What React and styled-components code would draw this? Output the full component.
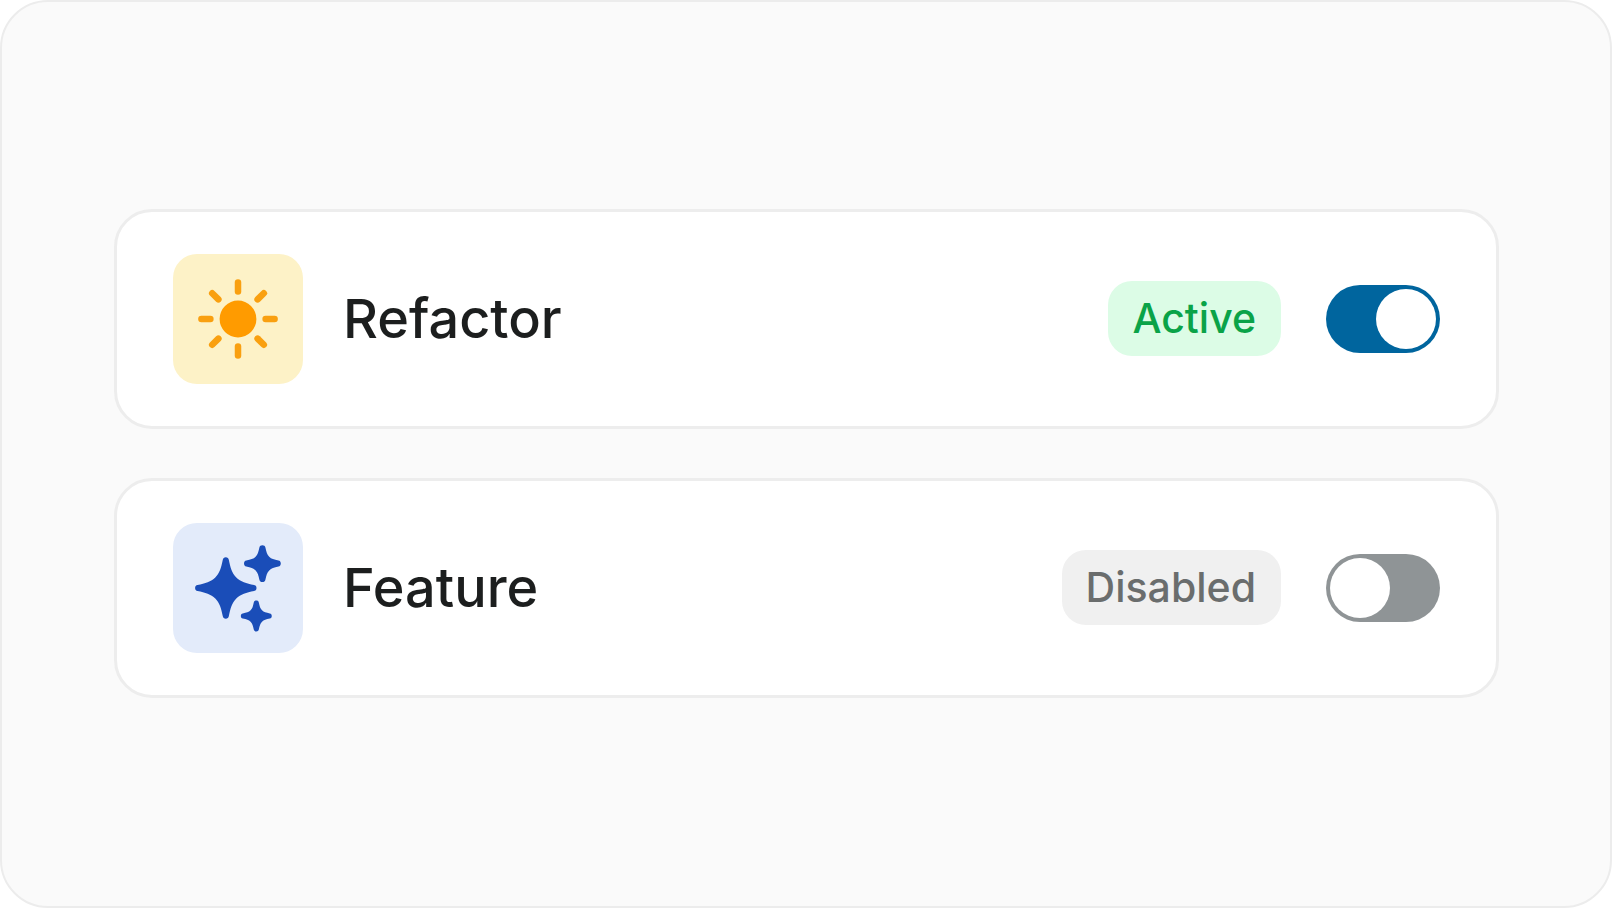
import React, { useState } from 'react';
import styled, { createGlobalStyle } from 'styled-components';


const GlobalStyle = createGlobalStyle`
    *, *::before, *::after {
        box-sizing: border-box;
    }
    body {
        margin: 0;
        background-color: #fff;
        font-family: Inter, "Liberation Sans", sans-serif;
    }
`;

const Panel = styled.main`
    min-height: 100vh;
    display: flex;
    flex-direction: column;
    justify-content: center;
    gap: 49px;
    padding: 0px 111px 2px 112px;
    background-color: #fafafa;
    border: 2px solid #ececec;
    border-radius: 48px;
`;

const Card = styled.section`
    display: flex;
    align-items: center;
    padding: 42px 56px;
    background-color: #fff;
    border: 3px solid #ededed;
    border-radius: 38px;
`;

const IconTile = styled.div`
    width: 130px;
    height: 130px;
    flex-shrink: 0;
    margin-right: 40px;
    border-radius: 24px;
    background-color: ${({ $color }) => $color};
    svg {
        display: block;
    }
`;

const Title = styled.label`
    flex: 1;
    font-size: 54px;
    line-height: 64px;
    font-weight: 500;
    color: #1c1e1e;
    cursor: pointer;
`;

const Badge = styled.span`
    padding: 12px 25px 12px 24px;
    margin-right: 45px;
    border-radius: 24px;
    font-size: 41px;
    line-height: 51px;
    font-weight: 500;
    color: ${({ $active }) => ($active ? '#0aa348' : '#6a6d6d')};
    background-color: ${({ $active }) => ($active ? '#dcfce6' : '#f0f0f0')};
`;

const Switch = styled.input`
    appearance: none;
    display: flex;
    flex-shrink: 0;
    justify-content: flex-start;
    width: 114px;
    height: 68px;
    margin: 0;
    padding: 4px;
    border-radius: 34px;
    background-color: #8f9496;
    cursor: pointer;
    &::before{
        content: '';
        width: 60px;
        height: 60px;
        border-radius: 50%;
        background-color: #fff;
    }
    &:checked{
        justify-content: flex-end;
        background-color: #00659e;
    }
`;

const SunIcon = () => (
    <svg width="130" height="130" viewBox="-65 -65 130 130" aria-hidden="true">
        <circle r="18.4" fill="#ff9b00" />
        <g stroke="#f9a010" strokeWidth="6.5" strokeLinecap="round">
            {[0, 90, 180, 270].map((angle) => (
                <g key={angle} transform={`rotate(${angle})`}>
                    <path d="M0 -36.6V-27.6" />
                    <path d="M-25.8 -25.8L-19.6 -19.6" />
                </g>
            ))}
        </g>
    </svg>
);

const STAR = `M0 -30.7C1.7 -30.7 2.7 -29.8 3 -28.3C4.6 -20.5 6.2 -14.8 10.5 -10.5
    C14.8 -6.2 20.5 -4.6 28.3 -3C29.8 -2.7 30.7 -1.7 30.7 0
    C30.7 1.7 29.8 2.7 28.3 3C20.5 4.6 14.8 6.2 10.5 10.5
    C6.2 14.8 4.6 20.5 3 28.3C2.7 29.8 1.7 30.7 0 30.7
    C-1.7 30.7 -2.7 29.8 -3 28.3C-4.6 20.5 -6.2 14.8 -10.5 10.5
    C-14.8 6.2 -20.5 4.6 -28.3 3C-29.8 2.7 -30.7 1.7 -30.7 0
    C-30.7 -1.7 -29.8 -2.7 -28.3 -3C-20.5 -4.6 -14.8 -6.2 -10.5 -10.5
    C-6.2 -14.8 -4.6 -20.5 -3 -28.3C-2.7 -29.8 -1.7 -30.7 0 -30.7Z`;

// the small stars have blunter tips than the big one
const SMALL_STAR = `M0 -18.4C1.6 -18.4 2.7 -17.6 3 -16.1C4 -11.6 4.6 -9 6.8 -6.8
    C9 -4.6 11.6 -4 16.1 -3C17.6 -2.7 18.4 -1.6 18.4 0
    C18.4 1.6 17.6 2.7 16.1 3C11.6 4 9 4.6 6.8 6.8
    C4.6 9 4 11.6 3 16.1C2.7 17.6 1.6 18.4 0 18.4
    C-1.6 18.4 -2.7 17.6 -3 16.1C-4 11.6 -4.6 9 -6.8 6.8
    C-9 4.6 -11.6 4 -16.1 3C-17.6 2.7 -18.4 1.6 -18.4 0
    C-18.4 -1.6 -17.6 -2.7 -16.1 -3C-11.6 -4 -9 -4.6 -6.8 -6.8
    C-4.6 -9 -4 -11.6 -3 -16.1C-2.7 -17.6 -1.6 -18.4 0 -18.4Z`;

const SparklesIcon = () => (
    <svg width="130" height="130" viewBox="-65 -65 130 130" fill="#1a4db8" aria-hidden="true">
        <path d={STAR} transform="translate(-12.2 0)" />
        <path d={SMALL_STAR} transform="translate(24.4 -24.4)" />
        <path d={SMALL_STAR} transform="translate(18.3 28) scale(0.84)" />
    </svg>
);

const items = [
    { id: 'refactor', name: 'Refactor', color: '#fdf2c7', icon: <SunIcon />, enabled: true },
    { id: 'feature', name: 'Feature', color: '#e3ebfa', icon: <SparklesIcon />, enabled: false },
];

const SettingCard = ({ item }) => {
    const [enabled, setEnabled] = useState(item.enabled);
    return (
        <Card>
            <IconTile $color={item.color}>{item.icon}</IconTile>
            <Title htmlFor={item.id}>{item.name}</Title>
            <Badge $active={enabled}>{enabled ? 'Active' : 'Disabled'}</Badge>
            <Switch
                id={item.id}
                type="checkbox"
                role="switch"
                checked={enabled}
                onChange={(e) => setEnabled(e.target.checked)}
            />
        </Card>
    )
}

const App = () => {
    return (
        <>
            <GlobalStyle />
            <Panel>
                {items.map((item) => (
                    <SettingCard key={item.id} item={item} />
                ))}
            </Panel>
        </>
    )
}

export default App
